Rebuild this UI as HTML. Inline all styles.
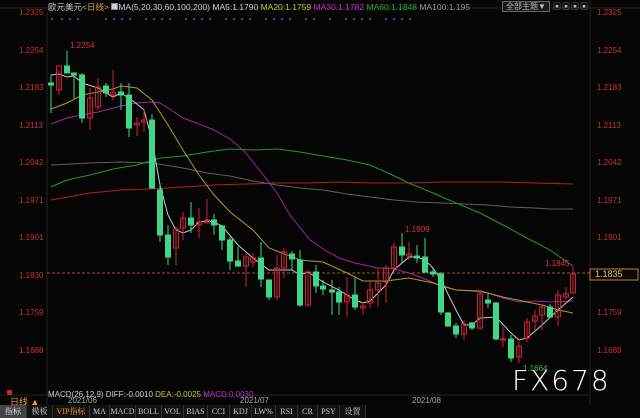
<!DOCTYPE html>
<html><head><meta charset="utf-8"><style>
*{margin:0;padding:0;box-sizing:border-box}
body{width:640px;height:418px;background:#050505;overflow:hidden;position:relative;font-family:"Liberation Sans","Noto Sans CJK SC",sans-serif}
.t{position:absolute;white-space:nowrap;font-size:9px}
.ax{position:absolute;font-size:8px;color:#c8303c}
.tb{position:absolute;top:405px;height:13px;font-size:8px;color:#ccc;font-family:"Liberation Serif","Noto Serif CJK SC",serif;line-height:13px;text-align:center;border-right:1px solid #333;background:#111}
</style></head><body>
<svg width="640" height="418" style="position:absolute;left:0;top:0">
<line x1="47" y1="12" x2="47" y2="405" stroke="#222"/>
<line x1="590" y1="0" x2="590" y2="405" stroke="#222"/>
<line x1="0" y1="8" x2="640" y2="8" stroke="#222"/>
<line x1="0" y1="395" x2="590" y2="395" stroke="#222"/>
<line x1="47" y1="273" x2="590" y2="273" stroke="#c8782a" stroke-dasharray="3,2" stroke-width="0.8"/>
<g fill="#1a7fd0">
<circle cx="52" cy="19" r="1"/><circle cx="62" cy="19" r="1"/><circle cx="70" cy="19" r="1"/><circle cx="78" cy="19" r="1"/>
<circle cx="106" cy="19" r="1"/><circle cx="114" cy="19" r="1"/><circle cx="122" cy="19" r="1"/><circle cx="130" cy="19" r="1"/>
<circle cx="146" cy="19" r="1"/><circle cx="154" cy="19" r="1"/><circle cx="162" cy="19" r="1"/><circle cx="170" cy="19" r="1"/>
<circle cx="186" cy="19" r="1"/><circle cx="194" cy="19" r="1"/><circle cx="202" cy="19" r="1"/><circle cx="210" cy="19" r="1"/>
<circle cx="226" cy="19" r="1"/><circle cx="234" cy="19" r="1"/><circle cx="242" cy="19" r="1"/><circle cx="250" cy="19" r="1"/>
<circle cx="266" cy="19" r="1"/><circle cx="274" cy="19" r="1"/><circle cx="282" cy="19" r="1"/><circle cx="290" cy="19" r="1"/>
<circle cx="306" cy="19" r="1"/><circle cx="314" cy="19" r="1"/><circle cx="330" cy="19" r="1"/>
<circle cx="346" cy="19" r="1"/><circle cx="354" cy="19" r="1"/><circle cx="362" cy="19" r="1"/><circle cx="370" cy="19" r="1"/>
<circle cx="386" cy="19" r="1"/><circle cx="394" cy="19" r="1"/><circle cx="402" cy="19" r="1"/><circle cx="410" cy="19" r="1"/>
</g>
<g fill="none" stroke-width="1">
<polyline stroke="#b02020" points="51,200 90,193 121,190 152,189 183,187 214,185 245,184 277,183 308,183 339,182 370,183 409,183 441,182 472,182 503,182 535,183 573,184"/>
<polyline stroke="#606060" points="51,165 90,163 121,162 152,163 183,168 207,173 230,176 253,181 277,185 300,188 323,190 347,194 370,197 394,200 417,202 441,203 464,204 488,205 511,207 535,208 550,209 573,209"/>
<polyline stroke="#1f9a1f" points="51,187 67,180 90,175 113,169 137,165 160,158 183,156 207,152 230,149 253,150 277,149 300,152 323,156 347,160 370,165 386,172 409,183 433,193 456,203 480,213 503,225 527,238 550,250 573,266"/>
<polyline stroke="#a820a8" points="51,124 67,118 82,115 98,112 121,106 137,103 152,102 160,103 168,108 183,118 199,124 214,130 230,139 245,152 261,172 277,193 290,215 310,240 323,249 339,258 355,263 378,268 394,269 409,273 425,279 441,286 456,290 472,291 488,293 503,298 519,302 535,301 550,302 573,301"/>
<polyline stroke="#a8a020" points="51,109 67,103 82,95 98,92 113,89 121,86 137,88 152,100 168,125 183,150 199,175 214,195 230,212 253,230 269,248 300,260 323,262 347,273 363,281 386,281 409,278 433,283 456,290 480,291 503,297 527,302 542,305 558,310 573,313"/>
<polyline stroke="#c8c8c8" points="51,75 59,74 67,77 74,76 82,83 98,88 113,97 121,93 137,104 144,110 152,140 160,185 168,215 176,230 183,233 191,230 199,222 207,221 214,222 222,226 238,245 253,258 269,270 277,270 292,270 300,275 308,272 323,282 339,290 355,300 363,303 370,301 386,285 394,270 409,257 417,257 425,260 433,268 441,280 456,310 464,325 472,325 480,318 496,317 511,333 519,340 527,338 542,325 558,310 573,297"/>
</g>
<g stroke="#3fd68a" fill="#3fd68a">
<line x1="51" y1="75" x2="51" y2="113"/><rect x="48.5" y="83" width="5" height="2"/>
<line x1="67" y1="51" x2="67" y2="73"/><rect x="64.5" y="66" width="5" height="7"/>
<line x1="74" y1="73" x2="74" y2="98"/><rect x="71.5" y="73" width="5" height="2"/>
<line x1="82" y1="73" x2="82" y2="123"/><rect x="79.5" y="75" width="5" height="43"/>
<line x1="106" y1="83" x2="106" y2="97"/><rect x="103.5" y="86" width="5" height="7"/>
<line x1="121" y1="83" x2="121" y2="110"/><rect x="118.5" y="92" width="5" height="3"/>
<line x1="129" y1="83" x2="129" y2="137"/><rect x="126.5" y="95" width="5" height="33"/>
<line x1="152" y1="114" x2="152" y2="188"/><rect x="149.5" y="120" width="5" height="68"/>
<line x1="160" y1="183" x2="160" y2="242"/><rect x="157.5" y="190" width="5" height="45"/>
<line x1="168" y1="225" x2="168" y2="265"/><rect x="165.5" y="235" width="5" height="22"/>
<line x1="191" y1="202" x2="191" y2="233"/><rect x="188.5" y="218" width="5" height="7"/>
<line x1="214" y1="214" x2="214" y2="235"/><rect x="211.5" y="220" width="5" height="5"/>
<line x1="222" y1="225" x2="222" y2="250"/><rect x="219.5" y="226" width="5" height="14"/>
<line x1="230" y1="237" x2="230" y2="270"/><rect x="227.5" y="240" width="5" height="21"/>
<line x1="238" y1="247" x2="238" y2="267"/><rect x="235.5" y="261" width="5" height="5"/>
<line x1="261" y1="242" x2="261" y2="287"/><rect x="258.5" y="258" width="5" height="21"/>
<line x1="269" y1="280" x2="269" y2="300"/><rect x="266.5" y="280" width="5" height="17"/>
<line x1="292" y1="251" x2="292" y2="270"/><rect x="289.5" y="254" width="5" height="5"/>
<line x1="300" y1="250" x2="300" y2="307"/><rect x="297.5" y="260" width="5" height="45"/>
<line x1="316" y1="265" x2="316" y2="293"/><rect x="313.5" y="272" width="5" height="14"/>
<line x1="323" y1="280" x2="323" y2="295"/><rect x="320.5" y="286" width="5" height="3"/>
<line x1="332" y1="280" x2="332" y2="315"/><rect x="329.5" y="290" width="5" height="2"/>
<line x1="339" y1="287" x2="339" y2="315"/><rect x="336.5" y="292" width="5" height="10"/>
<line x1="355" y1="277" x2="355" y2="310"/><rect x="352.5" y="295" width="5" height="12"/>
<line x1="402" y1="233" x2="402" y2="263"/><rect x="399.5" y="247" width="5" height="8"/>
<line x1="417" y1="245" x2="417" y2="263"/><rect x="414.5" y="256" width="5" height="2"/>
<line x1="425" y1="238" x2="425" y2="273"/><rect x="422.5" y="257" width="5" height="15"/>
<line x1="433" y1="268" x2="433" y2="277"/><rect x="430.5" y="272" width="5" height="2"/>
<line x1="441" y1="272" x2="441" y2="315"/><rect x="438.5" y="274" width="5" height="38"/>
<line x1="448" y1="312" x2="448" y2="327"/><rect x="445.5" y="313" width="5" height="13"/>
<line x1="456" y1="323" x2="456" y2="338"/><rect x="453.5" y="326" width="5" height="8"/>
<line x1="472" y1="322" x2="472" y2="330"/><rect x="469.5" y="323" width="5" height="5"/>
<line x1="488" y1="293" x2="488" y2="308"/><rect x="485.5" y="300" width="5" height="3"/>
<line x1="496" y1="302" x2="496" y2="340"/><rect x="493.5" y="303" width="5" height="36"/>
<line x1="511" y1="335" x2="511" y2="362"/><rect x="508.5" y="339" width="5" height="19"/>
<line x1="550" y1="304" x2="550" y2="318"/><rect x="547.5" y="307" width="5" height="10"/>
</g>
<g stroke="#d0203a" fill="none">
<line x1="59" y1="70" x2="59" y2="95"/><rect x="56.5" y="66" width="5" height="24"/>
<line x1="90" y1="88" x2="90" y2="130"/><rect x="87.5" y="98" width="5" height="20"/>
<line x1="98" y1="78" x2="98" y2="110"/><rect x="95.5" y="87" width="5" height="20"/>
<line x1="113" y1="70" x2="113" y2="100"/><rect x="110.5" y="92" width="5" height="3"/>
<line x1="137" y1="117" x2="137" y2="136"/><rect x="134.5" y="123" width="5" height="2"/>
<line x1="144" y1="108" x2="144" y2="132"/><rect x="141.5" y="120" width="5" height="2"/>
<line x1="176" y1="227" x2="176" y2="265"/><rect x="173.5" y="229" width="5" height="19"/>
<line x1="183" y1="212" x2="183" y2="240"/><rect x="180.5" y="218" width="5" height="10"/>
<line x1="199" y1="208" x2="199" y2="238"/><rect x="196.5" y="222" width="5" height="3"/>
<line x1="207" y1="199" x2="207" y2="223"/><rect x="204.5" y="220" width="5" height="3"/>
<line x1="246" y1="252" x2="246" y2="287"/><rect x="243.5" y="257" width="5" height="9"/>
<line x1="253" y1="253" x2="253" y2="267"/><rect x="250.5" y="258" width="5" height="4"/>
<line x1="277" y1="255" x2="277" y2="300"/><rect x="274.5" y="268" width="5" height="29"/>
<line x1="284" y1="248" x2="284" y2="278"/><rect x="281.5" y="252" width="5" height="16"/>
<line x1="308" y1="270" x2="308" y2="307"/><rect x="305.5" y="272" width="5" height="33"/>
<line x1="347" y1="277" x2="347" y2="317"/><rect x="344.5" y="295" width="5" height="7"/>
<line x1="363" y1="302" x2="363" y2="315"/><rect x="360.5" y="306" width="5" height="2"/>
<line x1="370" y1="282" x2="370" y2="308"/><rect x="367.5" y="290" width="5" height="13"/>
<line x1="378" y1="268" x2="378" y2="307"/><rect x="375.5" y="283" width="5" height="7"/>
<line x1="386" y1="265" x2="386" y2="303"/><rect x="383.5" y="268" width="5" height="14"/>
<line x1="394" y1="242" x2="394" y2="270"/><rect x="391.5" y="247" width="5" height="21"/>
<line x1="409" y1="242" x2="409" y2="260"/><rect x="406.5" y="254" width="5" height="2"/>
<line x1="464" y1="320" x2="464" y2="340"/><rect x="461.5" y="324" width="5" height="10"/>
<line x1="480" y1="290" x2="480" y2="330"/><rect x="477.5" y="294" width="5" height="34"/>
<line x1="503" y1="327" x2="503" y2="347"/><rect x="500.5" y="339" width="5" height="1"/>
<line x1="519" y1="342" x2="519" y2="363"/><rect x="516.5" y="346" width="5" height="11"/>
<line x1="527" y1="318" x2="527" y2="342"/><rect x="524.5" y="322" width="5" height="16"/>
<line x1="535" y1="310" x2="535" y2="330"/><rect x="532.5" y="316" width="5" height="5"/>
<line x1="542" y1="305" x2="542" y2="330"/><rect x="539.5" y="307" width="5" height="8"/>
<line x1="558" y1="290" x2="558" y2="326"/><rect x="555.5" y="295" width="5" height="22"/>
<line x1="566" y1="287" x2="566" y2="300"/><rect x="563.5" y="294" width="5" height="3"/>
<line x1="573" y1="266" x2="573" y2="293"/><rect x="570.5" y="274" width="5" height="19"/>
</g>
<rect x="590" y="269" width="48" height="11" fill="#0a0a0a" stroke="#c8822a"/>
<rect x="7" y="390" width="5" height="5" fill="#d02030"/>
</svg>
<div class="t" style="left:48px;top:1px;color:#ccc;font-size:8.5px">欧元美元<span style="color:#d4a040">&lt;日线&gt;</span> <span style="display:inline-block;width:7px;height:7px;background:#ccd;border:1px solid #888"></span>MA(5,20,30,60,100,200) MA5:1.1790 <span style="color:#c8c020">MA20:1.1759</span> <span style="color:#c030c0">MA30:1.1782</span> <span style="color:#20b020">MA60:1.1848</span> <span style="color:#999">MA100:1.195</span></div>
<div class="t" style="left:502px;top:1px;width:48px;height:11px;border:1px solid #666;color:#bbb;font-size:8px;text-align:center;line-height:9px;background:#1a1a1a">全部主题▼</div>
<div class="t" style="left:553px;top:1px;width:40px;height:11px;color:#bbb;font-size:8px;letter-spacing:1px">▣▣▣▣</div>
<div class="ax" style="left:19px;top:8px">1.2325</div><div class="ax" style="left:597px;top:8px">1.2325</div>
<div class="ax" style="left:19px;top:46px">1.2254</div><div class="ax" style="left:597px;top:46px">1.2254</div>
<div class="ax" style="left:19px;top:83px">1.2183</div><div class="ax" style="left:597px;top:83px">1.2183</div>
<div class="ax" style="left:19px;top:121px">1.2113</div><div class="ax" style="left:597px;top:121px">1.2113</div>
<div class="ax" style="left:19px;top:158px">1.2042</div><div class="ax" style="left:597px;top:158px">1.2042</div>
<div class="ax" style="left:19px;top:196px">1.1971</div><div class="ax" style="left:597px;top:196px">1.1971</div>
<div class="ax" style="left:19px;top:233px">1.1901</div><div class="ax" style="left:597px;top:233px">1.1901</div>
<div class="ax" style="left:19px;top:271px">1.1830</div>
<div class="ax" style="left:19px;top:308px">1.1759</div><div class="ax" style="left:597px;top:308px">1.1759</div>
<div class="ax" style="left:19px;top:346px">1.1688</div><div class="ax" style="left:597px;top:346px">1.1688</div>
<div class="t" style="left:595px;top:269px;color:#e8c060;font-size:9px">1.1835</div>
<div class="t" style="left:70px;top:41px;color:#e03040;font-size:8px">1.2254</div>
<div class="t" style="left:405px;top:225px;color:#e03040;font-size:8px">1.1909</div>
<div class="t" style="left:545px;top:259px;color:#e03040;font-size:8px">1.1845</div>
<div class="t" style="left:523px;top:364px;color:#30c070;font-size:8px">1.1664</div>
<div class="t" style="left:512px;top:364px;color:#fff;font-size:28px;letter-spacing:2px;font-family:'DejaVu Sans',sans-serif;font-weight:300">FX678</div>
<div class="t" style="left:48px;top:390px;color:#ccc;font-size:8px">MACD(26,12,9) DIFF:-0.0010 <span style="color:#c8c020">DEA:-0.0025</span> <span style="color:#c030c0">MACD:0.0030</span></div>
<div class="t" style="left:10px;top:395px;color:#e8a030;font-size:9px">日线 ▲</div>
<div class="t" style="left:68px;top:396px;color:#aaa;font-size:8px">2021/06</div>
<div class="t" style="left:240px;top:396px;color:#aaa;font-size:8px">2021/07</div>
<div class="t" style="left:412px;top:396px;color:#aaa;font-size:8px">2021/08</div>
<div class="tb" style="left:0;width:27px;background:#444;color:#eee">指标</div>
<div class="tb" style="left:27px;width:26px">模板</div>
<div class="tb" style="left:53px;width:37px;color:#e8a030">VIP指标</div>
<div class="tb" style="left:90px;width:20px">MA</div>
<div class="tb" style="left:110px;width:26px">MACD</div>
<div class="tb" style="left:136px;width:26px">BOLL</div>
<div class="tb" style="left:162px;width:22px">VOL</div>
<div class="tb" style="left:184px;width:24px">BIAS</div>
<div class="tb" style="left:208px;width:22px">CCI</div>
<div class="tb" style="left:230px;width:22px">KDJ</div>
<div class="tb" style="left:252px;width:24px">LW%</div>
<div class="tb" style="left:276px;width:22px">RSI</div>
<div class="tb" style="left:298px;width:20px">CR</div>
<div class="tb" style="left:318px;width:22px">PSY</div>
<div class="tb" style="left:340px;width:26px">设置</div>
</body></html>
